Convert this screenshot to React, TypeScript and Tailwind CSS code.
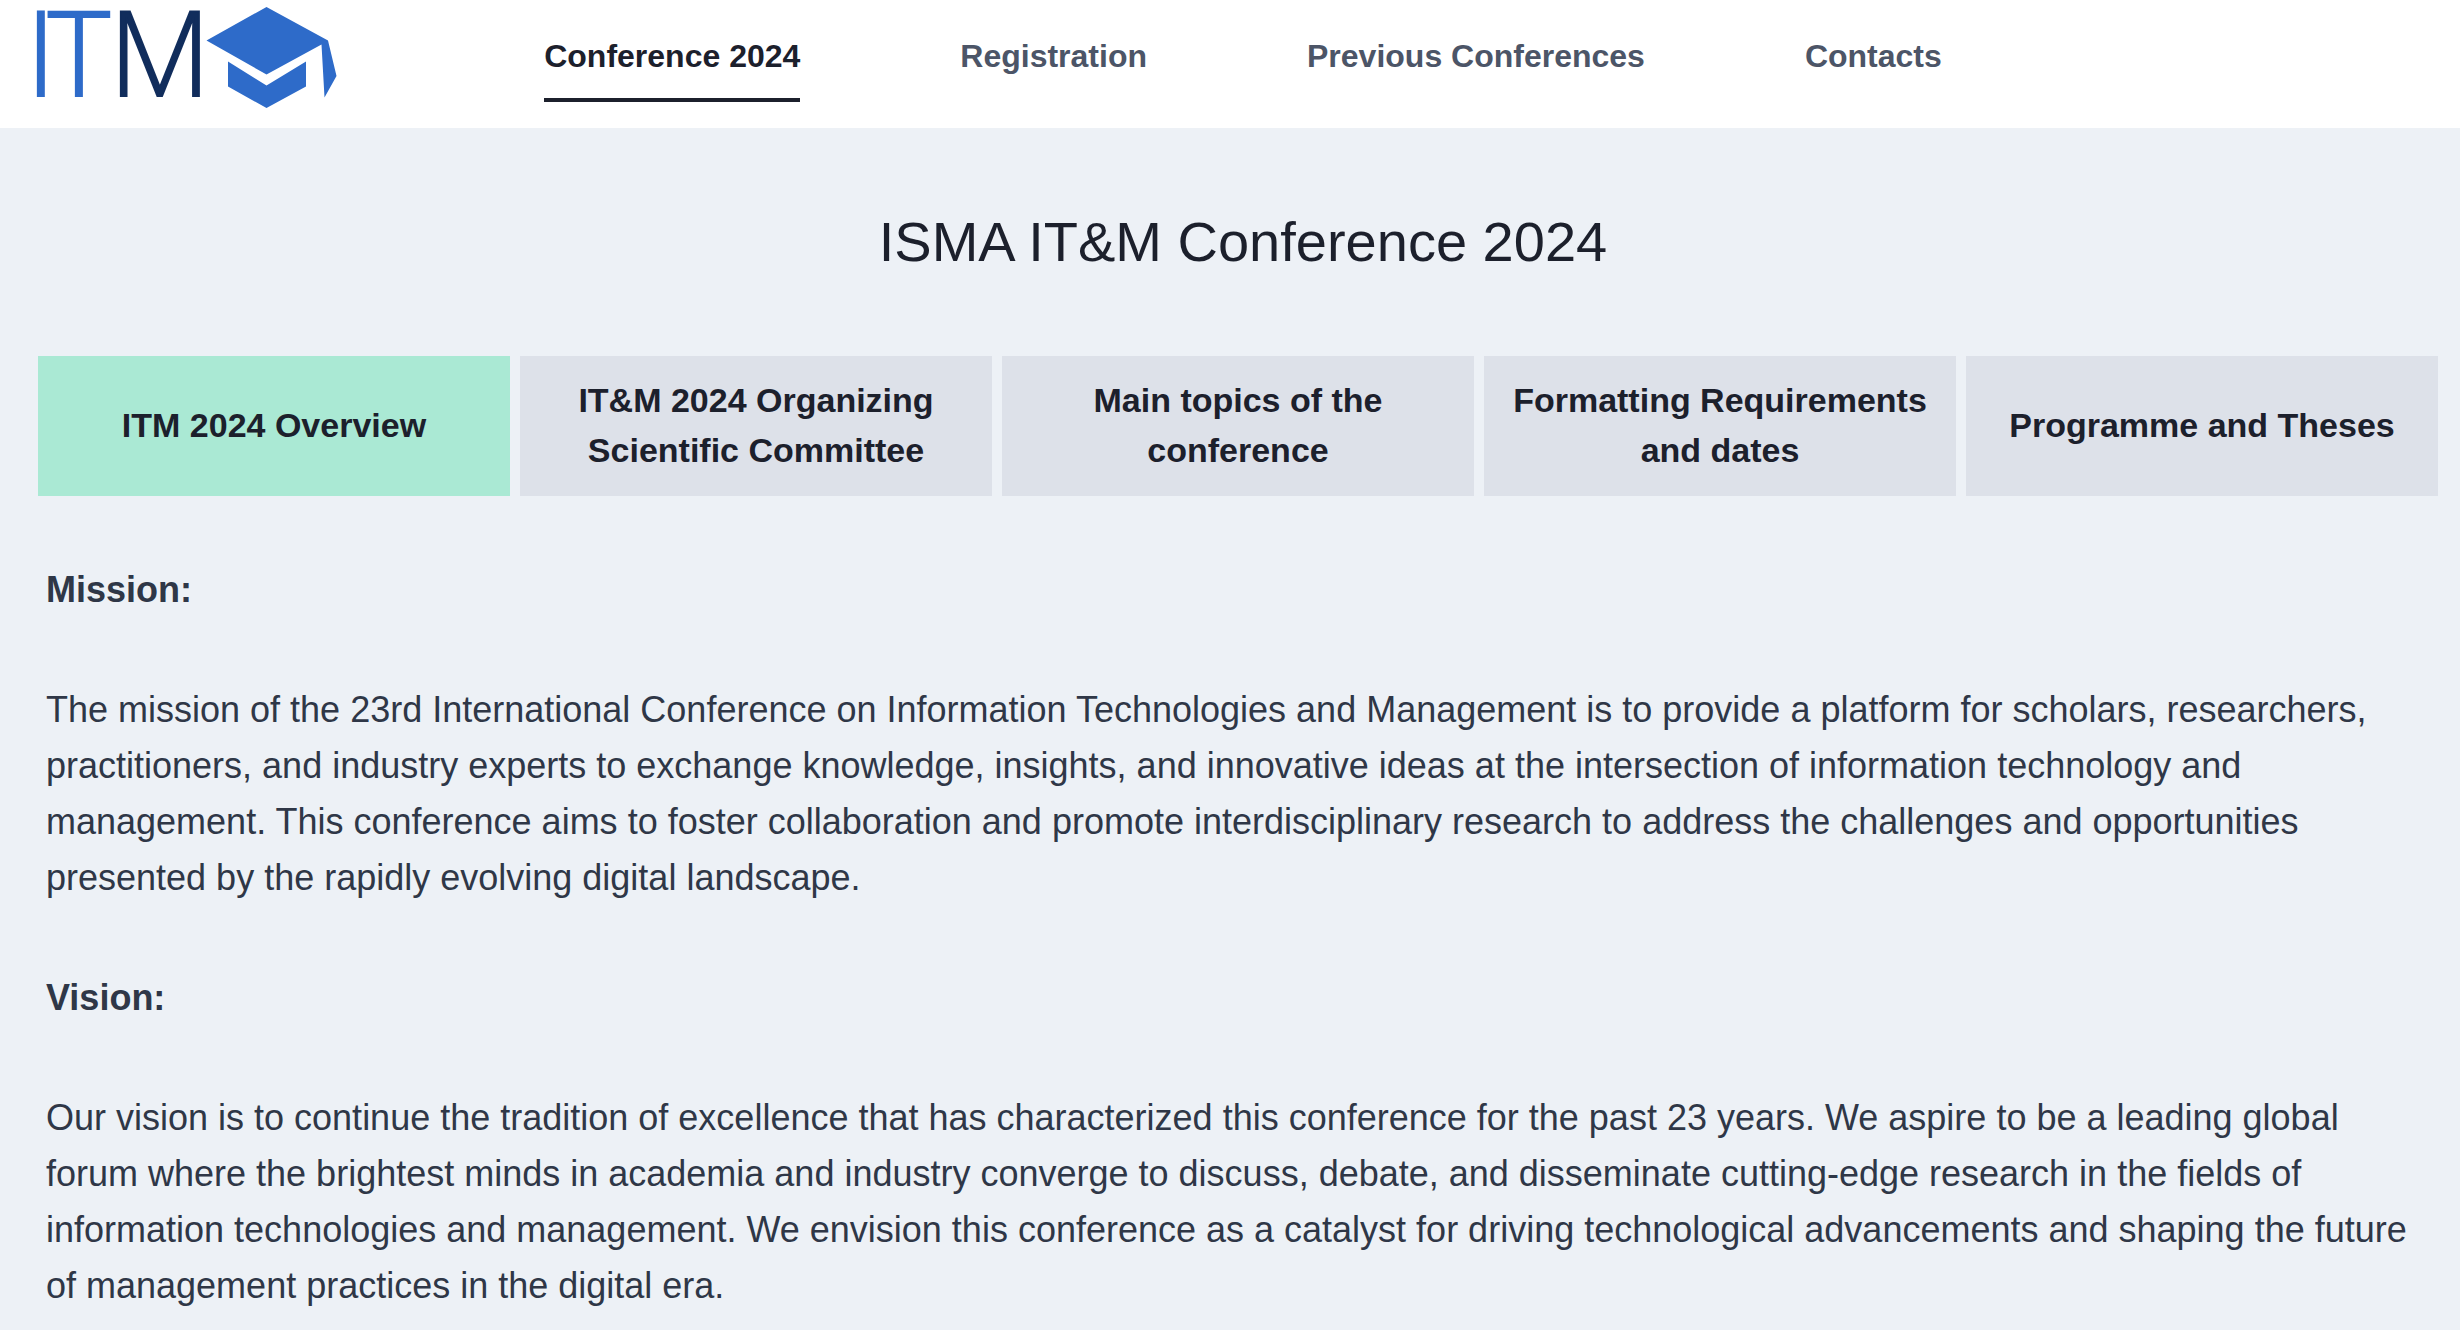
import { useState } from 'react';
import clsx from 'clsx';

const links = ['Conference 2024', 'Registration', 'Previous Conferences', 'Contacts'];

const tabs = [
  'ITM 2024 Overview',
  'IT&M 2024 Organizing Scientific Committee',
  'Main topics of the conference',
  'Formatting Requirements and dates',
  'Programme and Theses',
];

const sections = [
  {
    title: 'Mission:',
    text: 'The mission of the 23rd International Conference on Information Technologies and Management is to provide a platform for scholars, researchers, practitioners, and industry experts to exchange knowledge, insights, and innovative ideas at the intersection of information technology and management. This conference aims to foster collaboration and promote interdisciplinary research to address the challenges and opportunities presented by the rapidly evolving digital landscape.',
  },
  {
    title: 'Vision:',
    text: 'Our vision is to continue the tradition of excellence that has characterized this conference for the past 23 years. We aspire to be a leading global forum where the brightest minds in academia and industry converge to discuss, debate, and disseminate cutting-edge research in the fields of information technologies and management. We envision this conference as a catalyst for driving technological advancements and shaping the future of management practices in the digital era.',
  },
];

function Logo() {
  return (
    <svg viewBox="0 0 300 110" className="h-[110px] w-[300px] overflow-visible" role="img" aria-label="ITM">
      <text x="-12 10 71" y="96" fontFamily="'Open Sans', sans-serif" fontSize="118" fontWeight="300" fill="#2e6bc9" stroke="#2e6bc9" strokeWidth="2">
        IT<tspan fill="#112d5c" stroke="#112d5c">M</tspan>
      </text>
      <g fill="#2e6bc9">
        <path d="M168.500 40.500 228.500 7 290 40.500 298.500 76 286.500 97.500 283.500 44.500 228.500 74.500Z" />
        <path d="M190 61.500 228.500 85.500 268 61.500V86.500L228.500 108 190 86.500Z" />
      </g>
    </svg>
  );
}

export default function App() {
  const [page, setPage] = useState(links[0]);
  const [tab, setTab] = useState(tabs[0]);

  return (
    <div className="min-h-screen bg-[#edf1f6] font-['Liberation_Sans',Arial,sans-serif] text-[#1c202c]">
      <header className="grid h-32 grid-cols-[1fr_auto_1fr] items-start bg-white pl-[38px] pr-3">
        <a href="#home"><Logo /></a>
        <nav className="flex gap-40 pt-[30px]">
          {links.map(link => (
            <a
              key={link}
              href="#page"
              onClick={() => setPage(link)}
              className={clsx(
                'border-b-4 pb-4 text-[32px] leading-[52px] font-bold whitespace-nowrap',
                page === link ? 'border-[#1c202c]' : 'border-transparent text-[#4c5567]',
              )}
            >
              {link}
            </a>
          ))}
        </nav>
      </header>
      <main className="pl-[38px] pr-3">
        <h1 className="py-20 text-center text-[56px] leading-[68px]">ISMA IT&amp;M Conference 2024</h1>
        <div role="tablist" className="grid grid-cols-5 gap-[10px] pr-[10px]">
          {tabs.map(t => (
            <button
              key={t}
              role="tab"
              aria-selected={tab === t}
              onClick={() => setTab(t)}
              className={clsx(
                'min-h-[140px] px-6 pt-[19px] pb-[21px] text-[34px] leading-[50px] font-bold',
                tab === t ? 'bg-[#aae9d4]' : 'bg-[#dde1e9]',
              )}
            >
              {t}
            </button>
          ))}
        </div>
        <div className="flex flex-col gap-16 px-2 pt-[66px] text-[36px] leading-[56px] text-[#2f3747]">
          {sections.map(s => (
            <section key={s.title} className="flex flex-col gap-16">
              <h2 className="font-bold">{s.title}</h2>
              <p>{s.text}</p>
            </section>
          ))}
        </div>
      </main>
    </div>
  );
}
